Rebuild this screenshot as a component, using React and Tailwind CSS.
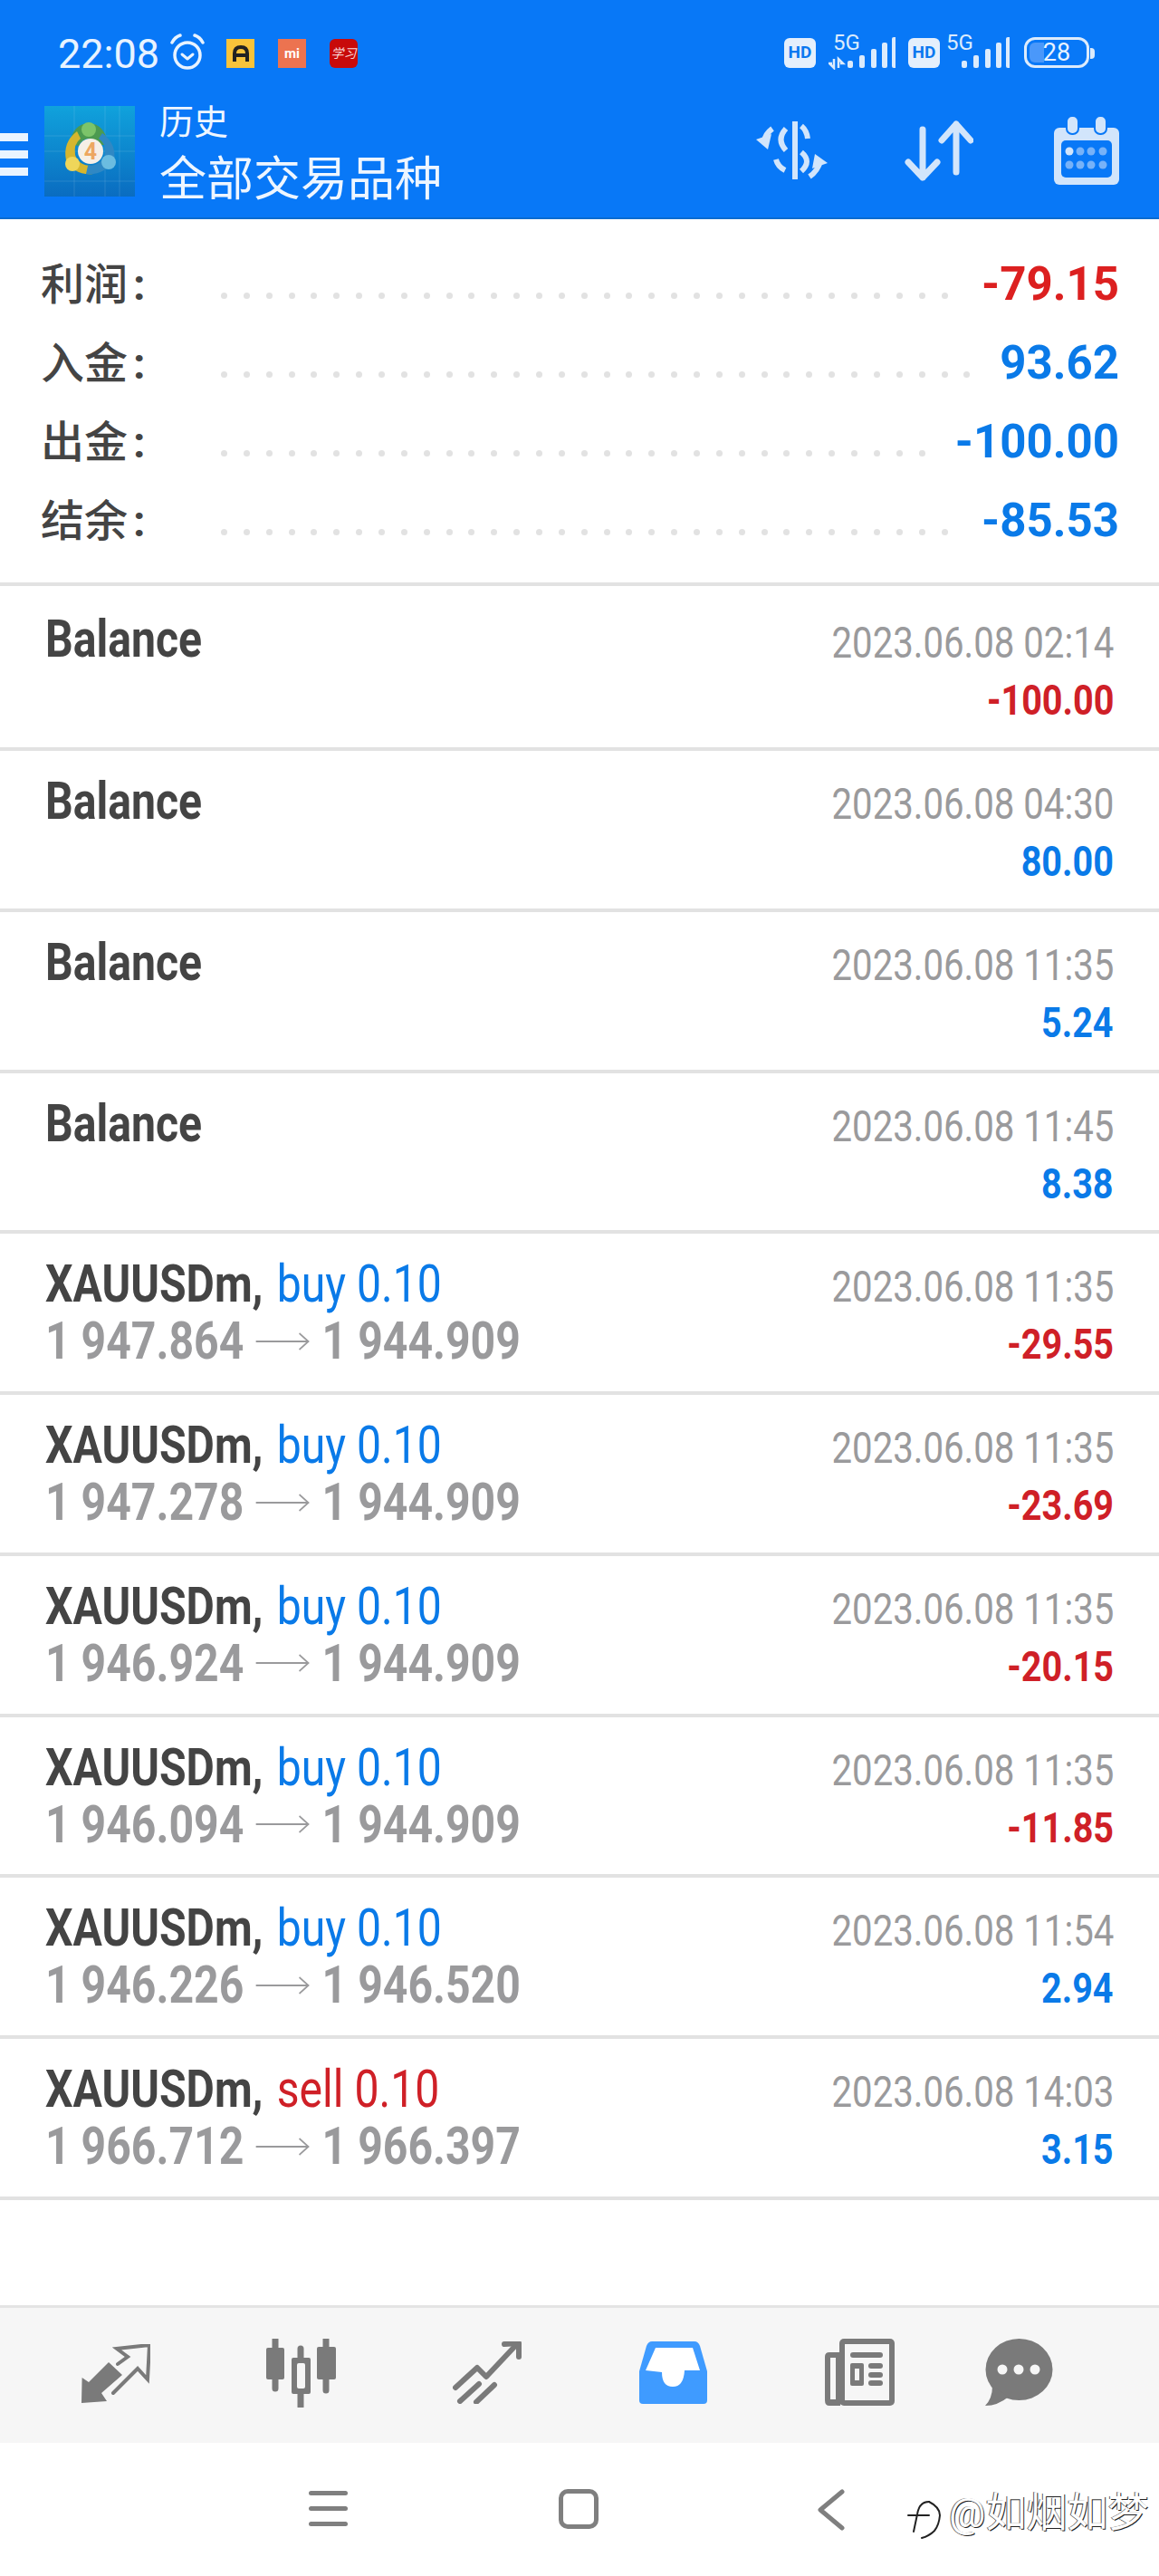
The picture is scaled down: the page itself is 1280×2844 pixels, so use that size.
const blue = "text-[#0a7ae8]";
const red = "text-[#cf2027]";

const deals = [
  { time: "02:14", value: "-100.00", up: false },
  { time: "04:30", value: "80.00", up: true },
  { time: "11:35", value: "5.24", up: true },
  { time: "11:45", value: "8.38", up: true },
];

const trades = [
  { side: "buy", from: "1 947.864", to: "1 944.909", time: "11:35", value: "-29.55", up: false },
  { side: "buy", from: "1 947.278", to: "1 944.909", time: "11:35", value: "-23.69", up: false },
  { side: "buy", from: "1 946.924", to: "1 944.909", time: "11:35", value: "-20.15", up: false },
  { side: "buy", from: "1 946.094", to: "1 944.909", time: "11:35", value: "-11.85", up: false },
  { side: "buy", from: "1 946.226", to: "1 946.520", time: "11:54", value: "2.94", up: true },
  { side: "sell", from: "1 966.712", to: "1 966.397", time: "14:03", value: "3.15", up: true },
];

const summary = [
  { label: "利润", value: "-79.15", dots: 33, color: "text-[#dc2020]" },
  { label: "入金", value: "93.62", dots: 34, color: blue },
  { label: "出金", value: "-100.00", dots: 32, color: blue },
  { label: "结余", value: "-85.53", dots: 33, color: blue },
];

function Alarm() {
  return (
    <svg width="38" height="40" viewBox="0 0 38 40" fill="none" stroke="#e8f3ff" strokeLinecap="round">
      <circle cx="19" cy="24" r="14" strokeWidth="3.5" />
      <path d="M13 23l6 5 6-5" strokeWidth="3" strokeLinejoin="round" />
      <path d="M2 10Q5 4 11 2M36 10Q33 4 27 2" strokeWidth="3.5" />
    </svg>
  );
}

function Signal({ arrows }) {
  const bars = [
    [0, 68, 8],
    [13, 62, 14],
    [26, 55, 21],
    [38, 48, 28],
    [49, 42, 34],
  ];
  return (
    <svg width={arrows ? 74 : 70} height="46" viewBox={arrows ? "-20 32 74 46" : "-16 32 70 46"} fill="#dcebfc" className="-mt-[6px]">
      <text x={arrows ? -15 : -16} y="56" fontSize="24" fontFamily="Roboto">5G</text>
      {arrows && <path d="M-14 66v10l-5-5h3M-9 76V66l5 5h-3" stroke="#dcebfc" strokeWidth="2.5" fill="none" />}
      {bars.map(([x, y, h]) => (
        <rect key={x} x={x + 1} y={y} width="6" height={h} rx="2" />
      ))}
    </svg>
  );
}

function HdBadge() {
  return (
    <div className="mt-[5px] flex h-[33px] w-[35px] items-center justify-center rounded-md bg-[#e4effc] text-[19px] font-bold text-[#0a78f0]">
      HD
    </div>
  );
}

function Logo() {
  return (
    <svg width="100" height="100" viewBox="0 0 100 100" className="mt-[9px]">
      <defs>
        <linearGradient id="logoBg" x1="0" y1="0" x2="0" y2="1">
          <stop offset="0" stopColor="#10a2dc" />
          <stop offset="1" stopColor="#0a6cc0" />
        </linearGradient>
      </defs>
      <rect width="100" height="100" fill="url(#logoBg)" />
      <path d="M0 33H100M0 50H100M0 83H100M33 0V100M67 0V100M83 0V100" stroke="#ffffff" strokeOpacity="0.12" strokeWidth="1" />
      <path d="M28 42Q31 20 49 19Q67 20 70 42L60 44Q56 36 49 36 42 36 38 44Z" fill="#4c9a50" />
      <path d="M36 28Q20 40 24 60 33 77 54 75L52 66Q38 66 34 54 32 42 40 36Z" fill="#d6b62e" />
      <path d="M64 30Q80 42 77 60 66 77 46 75L48 66Q62 66 67 54 69 42 60 36Z" fill="#2f88c4" />
      <circle cx="49" cy="26" r="8" fill="#7cc46a" />
      <circle cx="31" cy="64" r="8" fill="#efd65a" />
      <circle cx="71" cy="62" r="8" fill="#6bbce0" />
      <circle cx="51" cy="50" r="14" fill="#f6efe6" />
      <text x="51" y="59" textAnchor="middle" fontSize="25" fontWeight="700" fontFamily="Roboto" fill="#eda760">4</text>
    </svg>
  );
}

function DollarIcon() {
  return (
    <svg width="80" height="64" viewBox="0 0 80 64" fill="none" stroke="#d2e5fb" className="mt-[26px]">
      <path d="M43 0V63" strokeWidth="6" strokeLinecap="round" />
      <path d="M33 8Q22 20 33 32M50 5Q56 10 57 19M50 34Q62 44 50 55M22 42Q24 50 32 54" strokeWidth="6" />
      <path d="M18 8Q10 14 9 22" strokeWidth="6" />
      <path d="M0 20L17 14 13 31Z" fill="#d2e5fb" stroke="none" />
      <path d="M59 61Q68 55 71 44" strokeWidth="6" />
      <path d="M79 46L65 36 62 52Z" fill="#d2e5fb" stroke="none" />
    </svg>
  );
}

function SortIcon() {
  return (
    <svg width="76" height="68" viewBox="0 0 76 68" fill="none" stroke="#d2e5fb" strokeWidth="7" strokeLinecap="round" strokeLinejoin="round" className="ml-[84px] mt-[25px]">
      <path d="M20 10V63M4 46L20 63 36 46" />
      <path d="M57 4V57M41 22L57 4 73 22" />
    </svg>
  );
}

function CalendarIcon() {
  const xs = [17, 29, 41, 54];
  return (
    <svg width="72" height="76" viewBox="0 0 72 76" className="ml-[89px] mt-[20px]">
      <rect x="0" y="13" width="72" height="63" rx="6" fill="#d2e5fb" />
      <rect x="8" y="27" width="56" height="41" rx="5" fill="#0878f7" />
      <rect x="14" y="0" width="13" height="20" rx="6" fill="#d2e5fb" stroke="#0878f7" strokeWidth="2" />
      <rect x="45" y="0" width="13" height="20" rx="6" fill="#d2e5fb" stroke="#0878f7" strokeWidth="2" />
      {xs.map((x, i) => (
        <circle key={x} cx={x} cy="39" r="4.5" fill={i === 0 ? "#d2e5fb" : "#77b2f8"} />
      ))}
      {xs.map((x) => (
        <circle key={x} cx={x} cy="54" r="4.5" fill="#77b2f8" />
      ))}
    </svg>
  );
}

function Row({ time, value, up, first, children }) {
  return (
    <div className={`flex justify-between border-b-4 border-[#e2e2e2] pl-[50px] pr-[50px] ${first ? "h-[182px] pt-[27px]" : "h-[177.75px] pt-[24px]"}`}>
      <div>{children}</div>
      <div className={`flex flex-col items-end ${first ? "pt-[4px]" : "pt-[3px]"}`}>
        <div className="origin-right scale-x-[0.82] whitespace-nowrap text-[49px] leading-[64px] text-[#9a9a9c]">2023.06.08 {time}</div>
        <div className={`origin-right scale-x-[0.86] whitespace-nowrap text-[46px] font-bold leading-[62px] ${up ? blue : red}`}>{value}</div>
      </div>
    </div>
  );
}

function TradeIcon() {
  return (
    <svg width="76" height="67" viewBox="0 0 76 67" fill="none">
      <path d="M0 65L.6 37 8 42 30 20 45 34 22 54 28 63Z" fill="#7a7a7a" />
      <path d="M40 22L51 14 39 5 75 1 73 39 62 27 35 54" stroke="#7a7a7a" strokeWidth="4" strokeLinecap="round" />
    </svg>
  );
}

function CandleIcon() {
  return (
    <svg width="79" height="76" viewBox="0 0 79 76" fill="none">
      <path d="M11 0V55M39 11V75M67 0V57" stroke="#7a7a7a" strokeWidth="7" strokeLinecap="round" />
      <rect x="1" y="10" width="20" height="35" rx="2" fill="#7a7a7a" />
      <rect x="57" y="9" width="21" height="36" rx="2" fill="#7a7a7a" />
      <rect x="29" y="21" width="21" height="40" rx="2" fill="#7a7a7a" />
      <rect x="35" y="27" width="9" height="28" rx="2" fill="#f6f6f6" />
    </svg>
  );
}

function ChartIcon() {
  return (
    <svg width="76" height="69" viewBox="0 0 76 69" fill="none" stroke="#7a7a7a" strokeWidth="6" strokeLinecap="round" strokeLinejoin="round">
      <path d="M3 51L27 29 37 39 69 5" />
      <path d="M57 3L73 2V17" />
      <path d="M8 66L29 47M26 67L46 48" />
    </svg>
  );
}

function InboxIcon() {
  return (
    <svg width="75" height="69" viewBox="0 0 75 69">
      <path d="M14 0H61Q65 0 67 5L75 33V65Q75 69 71 69H4Q0 69 0 65V33L8 5Q10 0 14 0Z" fill="#3f9bff" />
      <path d="M18 7H59L67 32H50Q49 50 37 50 25 50 25 34L7 32Z" fill="#ffffff" />
    </svg>
  );
}

function NewsIcon() {
  return (
    <svg width="79" height="74" viewBox="0 0 79 74">
      <path d="M6 15H18V74H6Q1 74 1 68V20Q1 15 6 15Z" fill="#7a7a7a" />
      <rect x="7" y="21" width="6" height="46" fill="#f6f6f6" />
      <rect x="17" y="0" width="61" height="74" rx="5" fill="#7a7a7a" />
      <rect x="23" y="6" width="49" height="62" fill="#f6f6f6" />
      <rect x="29" y="15" width="36" height="6" rx="3" fill="#7a7a7a" />
      <rect x="29" y="27" width="15" height="25" rx="2" fill="#7a7a7a" />
      <rect x="34" y="33" width="5" height="13" fill="#f6f6f6" />
      <rect x="49" y="27" width="16" height="6" rx="3" fill="#7a7a7a" />
      <rect x="49" y="37" width="16" height="6" rx="3" fill="#7a7a7a" />
      <rect x="49" y="46" width="16" height="6" rx="3" fill="#7a7a7a" />
    </svg>
  );
}

function ChatIcon() {
  return (
    <svg width="75" height="74" viewBox="0 0 75 74">
      <ellipse cx="37.5" cy="34" rx="37" ry="34" fill="#7a7a7a" />
      <path d="M8 52Q8 66 0 74 14 74 26 64Z" fill="#7a7a7a" />
      <circle cx="19" cy="34" r="5.5" fill="#f6f6f6" />
      <circle cx="37" cy="34" r="5.5" fill="#f6f6f6" />
      <circle cx="55" cy="34" r="5.5" fill="#f6f6f6" />
    </svg>
  );
}

export default function App() {
  return (
    <div className="relative flex h-[2844px] w-[1280px] flex-col overflow-hidden bg-white font-['Roboto','Noto_Sans_CJK_SC',sans-serif]">
      <div className="h-[242px] border-b-2 border-[#0a6cd0] bg-[#0878f7]">
        <div className="flex h-[108px] items-start pl-[64px] pr-[71px] pt-[37px]">
          <span className="w-[124px] text-[45px] leading-[46px] text-[#e8f3ff]">22:08</span>
          <Alarm />
          <div className="ml-[24px] mt-[6px] flex h-[32px] w-[31px] items-center justify-center bg-[#f8c33a]">
            <svg width="20" height="20" viewBox="0 0 20 20" fill="none" stroke="#222222" strokeWidth="4">
              <path d="M3 19V10Q3 3 10 3 17 3 17 10V19M3 12H17" />
            </svg>
          </div>
          <div className="ml-[26px] mt-[6px] flex h-[32px] w-[31px] items-center justify-center bg-[#ec7350] text-[15px] font-bold leading-none text-white">mi</div>
          <div className="ml-[26px] mt-[6px] flex h-[32px] w-[31px] items-center justify-center rounded-md bg-[#c80a0a] text-[14px] italic leading-none text-[#f8d8d8]">学习</div>
          <div className="ml-auto flex items-start">
            <HdBadge />
            <div className="ml-[14px]"><Signal arrows /></div>
            <div className="ml-[14px]"><HdBadge /></div>
            <div className="ml-[7px]"><Signal /></div>
            <div className="relative ml-[16px] mt-[4px] flex h-[34px] w-[72px] items-center justify-center rounded-xl border-[3px] border-[#dcebfc] text-[27px] leading-none text-[#e8f3ff]">
              <div className="absolute bottom-[3px] left-[3px] top-[3px] w-[16px] rounded-l-md bg-[#4a98fa]" />
              <span className="relative">28</span>
            </div>
            <div className="ml-[1px] mt-[16px] h-[12px] w-[5px] rounded-r-sm bg-[#dcebfc]" />
          </div>
        </div>
        <div className="flex items-start pr-[44px]">
          <div className="mt-[39px] flex w-[31px] flex-col gap-[10px]">
            <div className="h-[9px] bg-[#eaf4ff]" />
            <div className="h-[9px] bg-[#eaf4ff]" />
            <div className="h-[9px] bg-[#eaf4ff]" />
          </div>
          <div className="ml-[18px]"><Logo /></div>
          <div className="ml-[27px] mt-[2px] flex flex-col text-[#eef6ff]">
            <span className="text-[38px] leading-[50px]">历史</span>
            <span className="text-[52px] leading-[78px]">全部交易品种</span>
          </div>
          <div className="ml-auto flex items-start">
            <DollarIcon />
            <SortIcon />
            <CalendarIcon />
          </div>
        </div>
      </div>

      <div className="border-b-4 border-[#e2e2e2] pb-[24px] pl-[45px] pr-[44px] pt-[29px]">
        {summary.map((s) => (
          <div key={s.label} className="flex h-[87px] items-center">
            <span className="w-[199px] text-[48px] font-medium text-[#444444]">
              {s.label}
              <span className="ml-[6px] font-bold">:</span>
            </span>
            <div className="mt-[23px] flex gap-[17.87px]">
              {Array.from({ length: s.dots }).map((_, i) => (
                <div key={i} className="h-[7px] w-[7px] rounded-full bg-[#e2e2e2]" />
              ))}
            </div>
            <span className={`ml-auto text-[51px] font-bold ${s.color}`}>{s.value}</span>
          </div>
        ))}
      </div>

      {deals.map((d, i) => (
        <Row key={i} first={i === 0} {...d}>
          <div className="origin-left scale-x-[0.83] text-[58px] font-bold leading-[63px] text-[#444444]">Balance</div>
        </Row>
      ))}
      {trades.map((t, i) => (
        <Row key={i} {...t}>
          <div className="origin-left scale-x-[0.83] whitespace-nowrap text-[58px] leading-[63px]">
            <span className="font-bold text-[#444444]">XAUUSDm, </span>
            <span className={`ml-[4px] ${t.side === "buy" ? blue : red}`}>{t.side} 0.10</span>
          </div>
          <div className="flex origin-left scale-x-[0.83] items-center whitespace-nowrap text-[58px] font-bold leading-[63px] text-[#9a9a9c]">
            <span>{t.from}</span>
            <svg width="72" height="24" viewBox="0 0 72 24" fill="none" stroke="#9a9a9c" strokeWidth="2" className="mx-[16px]">
              <path d="M0 12H70M58 3L70 12 58 21" />
            </svg>
            <span>{t.to}</span>
          </div>
        </Row>
      ))}

      <div className="mt-auto h-[152px] border-t-[3px] border-[#e4e4e4] bg-[#f6f6f6]">
        <div className="flex items-start pl-[90px] pr-[117px] pt-[34px]">
          <div className="mt-[6px]"><TradeIcon /></div>
          <div className="ml-[127px]"><CandleIcon /></div>
          <div className="ml-[128px] mt-[3px]"><ChartIcon /></div>
          <div className="ml-[130px] mt-[3px]"><InboxIcon /></div>
          <div className="ml-[129px]"><NewsIcon /></div>
          <div className="ml-auto"><ChatIcon /></div>
        </div>
      </div>
      <div className="flex h-[147px] items-start bg-white pl-[341px] pt-[51px]">
        <div className="mt-[2px] flex w-[43px] flex-col gap-[12px]">
          <div className="h-[5px] rounded-full bg-[#7f7f7f]" />
          <div className="h-[5px] rounded-full bg-[#7f7f7f]" />
          <div className="h-[5px] rounded-full bg-[#7f7f7f]" />
        </div>
        <div className="ml-[233px] h-[44px] w-[44px] rounded-[10px] border-[5px] border-[#7f7f7f]" />
        <svg width="30" height="46" viewBox="0 0 30 46" fill="none" stroke="#7f7f7f" strokeWidth="5" strokeLinecap="round" strokeLinejoin="round" className="ml-[242px]">
          <path d="M27 3L3 23 27 43" />
        </svg>
      </div>

      <div className="absolute left-[1001px] top-[2748px] flex items-start text-[45px] leading-[54px] text-white [text-shadow:1px_1px_0_#222222,-1px_0_0_#555555]">
        <svg width="40" height="58" viewBox="0 0 40 58" fill="none" stroke="#222222" strokeWidth="2" strokeLinecap="round">
          <path d="M25 14Q37 20 37 29 36 40 31 46 25 52 17 54" />
          <path d="M25 14Q14 14 12 28L8 47M2 29H25" />
        </svg>
        <span className="ml-[7px]">@如烟如梦</span>
      </div>
    </div>
  );
}
